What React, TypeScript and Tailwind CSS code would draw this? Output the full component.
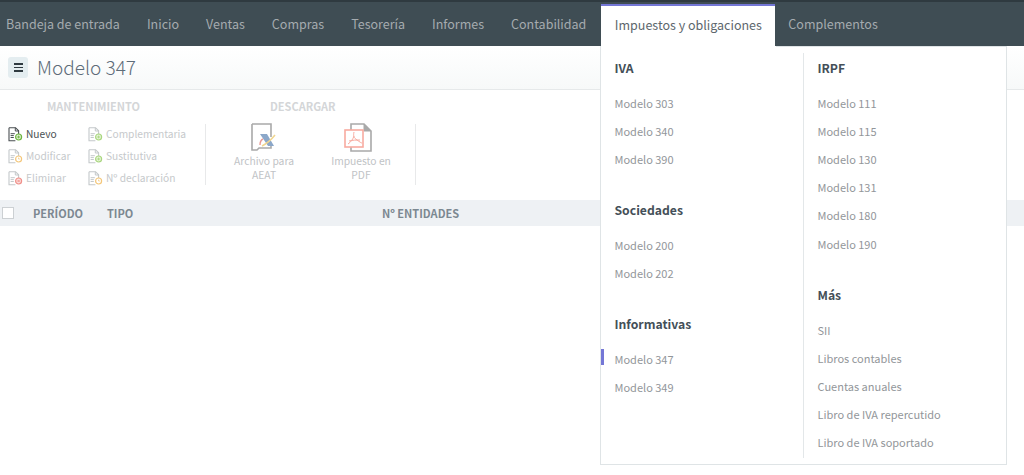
import React from "react";

const font = { fontFamily: '"Noto Sans CJK SC", "Noto Sans", sans-serif' };

function DocIcon({ color, tint, dark = false, glyph }: { color: string; tint: string; dark?: boolean; glyph: "plus" | "x" | "clock" }) {
  const s = dark ? "#4a4f52" : "#c4c8ca";
  return (
    <svg width="15" height="15" viewBox="0 0 15 15" fill="none" className="shrink-0">
      <path d="M1 .7h6.5L10.6 3.8V7M1 .7v13h6.4" stroke={s} strokeWidth="1.1" />
      <path d="M7.3.7v3.3h3.3" stroke={s} strokeWidth="1" />
      <path d="M2.6 6.7h4.2M2.6 8.6h3.2M2.6 10.5h3.2" stroke={s} strokeWidth="1" />
      <circle cx="10.6" cy="10" r="3" stroke={color} strokeWidth="1.2" fill={tint} />
      {glyph === "plus" && <path d="M9.2 10h2.8M10.6 8.6v2.8" stroke={color} strokeWidth="0.9" />}
      {glyph === "x" && <path d="M9.5 8.9l2.2 2.2M11.7 8.9l-2.2 2.2" stroke={color} strokeWidth="0.9" />}
      {glyph === "clock" && <path d="M10.6 8.6V10h1.2" stroke={color} strokeWidth="0.8" />}
    </svg>
  );
}

function Action({ label, color, tint, glyph, active = false }: { label: string; color: string; tint: string; glyph: "plus" | "x" | "clock"; active?: boolean }) {
  return (
    <div className="flex items-center h-[22px]">
      <DocIcon color={color} tint={tint} glyph={glyph} dark={active} />
      <span className={`ml-[3px] text-[10.2px] leading-none ${active ? "text-[#4a4f52]" : "text-[#c6c9cb]"}`}>{label}</span>
    </div>
  );
}

function AeatIcon() {
  return (
    <svg width="27" height="30" viewBox="0 0 27 30" fill="none">
      <path d="M1 1h19v13M1 1v26h5l2-2h12v-3" stroke="#a9a9a9" strokeWidth="1.6" />
      <path d="M9 11h7l7 12h-6z" fill="#8ba7c9" />
      <path d="M11 23c4-2 9-6 13-11" stroke="#f0d690" strokeWidth="1.6" />
      <path d="M9 22c0-3 1-5 3-6" stroke="#e99a94" strokeWidth="1.4" />
    </svg>
  );
}

function PdfIcon() {
  return (
    <svg width="29" height="30" viewBox="0 0 29 30" fill="none">
      <path d="M7 7V1h13l7 7v20H7v-5" stroke="#a9a9a9" strokeWidth="1.6" />
      <path d="M20 1v7h7" fill="#a9a9a9" stroke="#a9a9a9" />
      <rect x="1" y="7" width="18" height="17" fill="#fff" stroke="#f8aba0" strokeWidth="1.6" />
      <path d="M10 9c-1 4 0 6 3 8s4 3 5 3M10 13c-1 3-3 6-6 8M5 18c4-1 7-1 11-1" stroke="#f8aba0" strokeWidth="1" />
    </svg>
  );
}

function Section({ title, items, spacing = "" }: { title: string; items: string[]; spacing?: string }) {
  return (
    <div className={spacing}>
      <div className="h-7 mb-[7px] flex items-center text-[12.2px] leading-none font-bold text-[#444f58]">{title}</div>
      {items.map((t) => (
        <div key={t} className="relative h-[28.2px] flex items-center text-[11px] leading-none text-[#92969a]">
          {t === "Modelo 347" && <span className="absolute left-[-13.5px] top-[4px] w-[3px] h-[16px] bg-[#7477d6]" />}
          {t}
        </div>
      ))}
    </div>
  );
}

const nav = ["Bandeja de entrada", "Inicio", "Ventas", "Compras", "Tesorería", "Informes", "Contabilidad"];

export default function App() {
  return (
    <div className="relative w-[1024px] h-[475px] overflow-hidden bg-white" style={font}>
      <div className="h-[2px] bg-[#2f3a40]" />
      <nav className="h-[44px] bg-[#3f4d54] flex pl-[6px] text-[12.5px] leading-none text-[#a5abaf]">
        {nav.map((n) => (
          <div key={n} className="mr-[27px] flex items-center whitespace-nowrap">{n}</div>
        ))}
        <div className="-ml-[12px] mt-[2px] h-[42px] w-[174px] bg-white border-t-2 border-[#7477d6] pb-[2px] flex items-center justify-center text-[#5d676d] whitespace-nowrap">
          Impuestos y obligaciones
        </div>
        <div className="ml-[13px] flex items-center whitespace-nowrap">Complementos</div>
      </nav>

      <header className="h-[44px] border-b border-[#e6e9ea] bg-gradient-to-b from-white to-[#f7f9f9] flex items-center pl-2">
        <div className="w-5 h-[21px] rounded-[3px] bg-[#e4edf0] flex flex-col items-center justify-center gap-[2px]">
          <span className="w-[9px] h-[1.5px] bg-[#2f3a40]" />
          <span className="w-[9px] h-[1.5px] bg-[#2f3a40]" />
          <span className="w-[9px] h-[1.5px] bg-[#2f3a40]" />
        </div>
        <h1 className="ml-[9px] pb-[2px] text-[19px] leading-none font-light text-[#5d6c79]">Modelo 347</h1>
      </header>

      <section className="h-[110px] flex pt-[8px] relative">
        <div className="w-[206px] shrink-0">
          <div className="h-4 text-center text-[11px] leading-4 font-bold text-[#d4d6d8] w-[187px]">MANTENIMIENTO</div>
          <div className="flex pl-2 pt-[9px]">
            <div className="w-[80px]">
              <Action label="Nuevo" color="#6db33f" tint="#dff0d0" glyph="plus" active />
              <Action label="Modificar" color="#f4c77a" tint="#fff" glyph="clock" />
              <Action label="Eliminar" color="#f0908a" tint="#fbdcda" glyph="x" />
            </div>
            <div>
              <Action label="Complementaria" color="#a9d67f" tint="#e6f4d8" glyph="plus" />
              <Action label="Sustitutiva" color="#a9d67f" tint="#e6f4d8" glyph="plus" />
              <Action label="Nº declaración" color="#f4c77a" tint="#fff" glyph="clock" />
            </div>
          </div>
        </div>
        <div className="w-[1px] h-[61px] mt-[26px] -ml-[1px] bg-[#e8e9ea]" />
        <div className="w-[210px] shrink-0">
          <div className="h-4 text-[11px] leading-4 font-bold text-[#d4d6d8] pl-[64px]">DESCARGAR</div>
          <div className="flex pt-[9px] text-[10.3px] leading-[14px] text-[#bfc3c6] text-center">
            <div className="w-[90px] ml-[13px] flex flex-col items-center">
              <AeatIcon />
              <div className="mt-[1px]">Archivo para<br />AEAT</div>
            </div>
            <div className="w-[70px] ml-[17px] flex flex-col items-center">
              <span className="mr-[6px] flex"><PdfIcon /></span>
              <div className="mt-[1px]">Impuesto en<br />PDF</div>
            </div>
          </div>
        </div>
        <div className="w-[1px] h-[61px] mt-[26px] -ml-[1px] bg-[#e8e9ea]" />
      </section>

      <div className="h-[26px] bg-[#eef1f4] flex items-center text-[11px] leading-none font-bold text-[#7c8891]">
        <span className="ml-[2px] w-[12px] h-[12px] bg-white border border-[#ccd0d3] shrink-0" />
        <span className="ml-[19px] w-[74px]">PERÍODO</span>
        <span className="w-[275px]">TIPO</span>
        <span>Nº ENTIDADES</span>
      </div>

      <div className="absolute left-[600px] top-[46px] w-[407px] h-[419px] border border-t-0 border-[#dfe4e6] bg-white flex pt-[8px]">
        <div className="absolute left-[175px] right-0 top-0 h-[1px] bg-[#dfe4e6]" />
        <div className="w-[202px] pl-[13.5px] shrink-0">
          <Section title="IVA" items={["Modelo 303", "Modelo 340", "Modelo 390"]} spacing="mb-[22.5px]" />
          <Section title="Sociedades" items={["Modelo 200", "Modelo 202"]} spacing="mb-[22.5px]" />
          <Section title="Informativas" items={["Modelo 347", "Modelo 349"]} />
        </div>
        <div className="w-[1px] -mt-[1px] mb-[6px] bg-[#e3e7e9]" />
        <div className="pl-[13.5px]">
          <Section title="IRPF" items={["Modelo 111", "Modelo 115", "Modelo 130", "Modelo 131", "Modelo 180", "Modelo 190"]} spacing="mb-[23px]" />
          <Section title="Más" items={["SII", "Libros contables", "Cuentas anuales", "Libro de IVA repercutido", "Libro de IVA soportado"]} />
        </div>
      </div>
    </div>
  );
}
